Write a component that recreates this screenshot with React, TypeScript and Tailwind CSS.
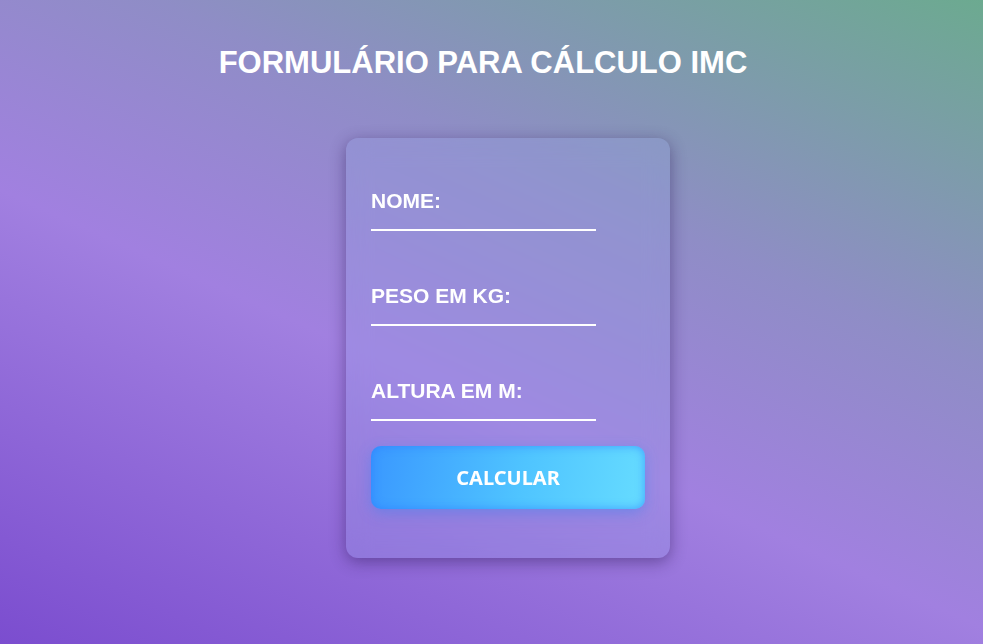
import React, { useState } from 'react';

export default function App() {
  const [nome, setNome] = useState('');
  const [peso, setPeso] = useState('');
  const [altura, setAltura] = useState('');

  const fields = [
    { label: 'NOME:', value: nome, set: setNome },
    { label: 'PESO EM KG:', value: peso, set: setPeso },
    { label: 'ALTURA EM M:', value: altura, set: setAltura },
  ];

  return (
    <div className="w-full h-[644px] font-['Liberation_Sans',Arial,sans-serif] text-white bg-[linear-gradient(24deg,#7b4dcf_0%,#a180e0_42%,#8f8dc6_66%,#6caa90_100%)]">
      <div className="w-[966px] flex flex-col items-center">
        <h1 className="mt-[45px] text-[31px] leading-[36px] font-bold">
          FORMULÁRIO PARA CÁLCULO IMC
        </h1>

        <form
          onSubmit={e => e.preventDefault()}
          className="mt-[57px] ml-[50px] w-[324px] h-[420px] rounded-xl bg-[rgba(150,175,235,0.22)] backdrop-blur-md shadow-[0_4px_16px_rgba(40,20,80,0.45)] px-[25px] pt-[51px]"
        >
          {fields.map((f, i) => (
            <div key={f.label} className={i > 0 ? 'mt-[53px]' : ''}>
              <label className="block text-[21px] leading-[24px] font-bold">{f.label}</label>
              <input
                type="text"
                value={f.value}
                onChange={e => f.set(e.target.value)}
                className="block w-[225px] h-[18px] bg-transparent border-0 border-b-2 border-white outline-none text-white text-sm"
              />
            </div>
          ))}

          <button
            type="submit"
            className="mt-[25px] w-[274px] h-[63px] rounded-[10px] bg-[linear-gradient(100deg,#3a98ff_0%,#4fc4ff_55%,#66dcff_100%)] shadow-[inset_0_0_10px_rgba(40,120,255,0.6),0_4px_14px_rgba(60,130,240,0.45)] font-['Noto_Sans',sans-serif] font-bold text-[20px] leading-none text-white"
          >
            CALCULAR
          </button>
        </form>
      </div>
    </div>
  );
}
